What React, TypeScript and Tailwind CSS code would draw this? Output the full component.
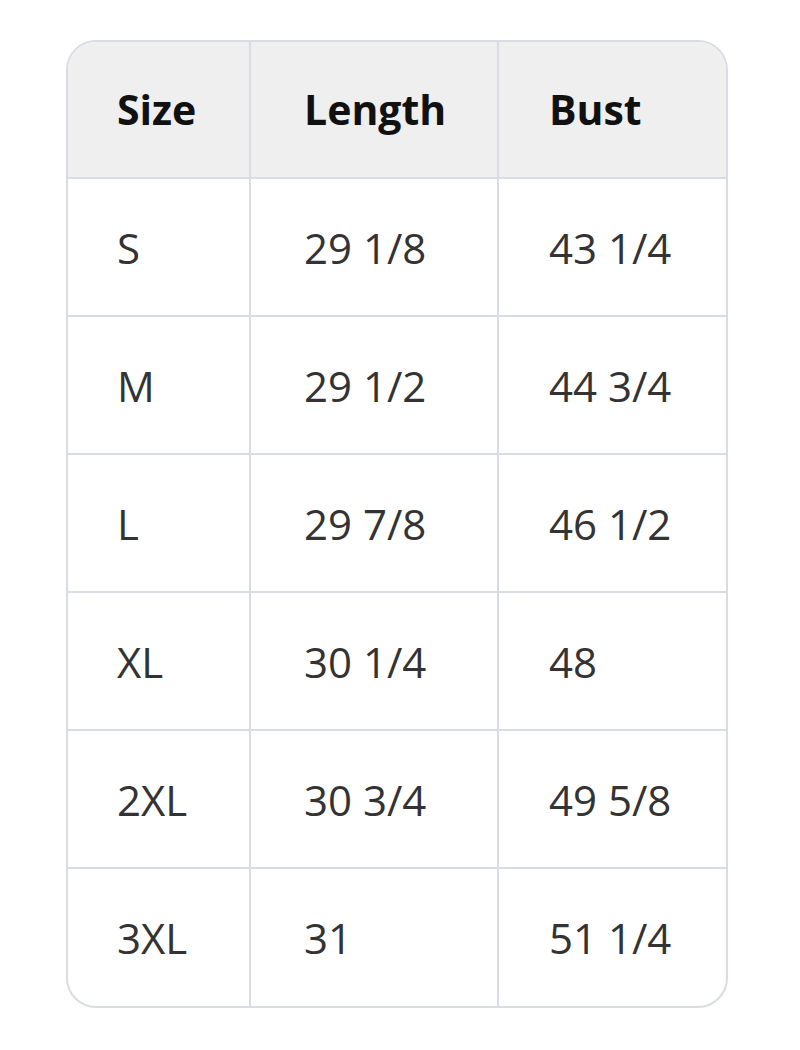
const rows = [
  ['S', '29 1/8', '43 1/4'],
  ['M', '29 1/2', '44 3/4'],
  ['L', '29 7/8', '46 1/2'],
  ['XL', '30 1/4', '48'],
  ['2XL', '30 3/4', '49 5/8'],
  ['3XL', '31', '51 1/4'],
];

const SizeChart = () => {
  return (
    <div className="min-h-[1050px] bg-white pt-[40px] pl-[66px]" style={{ fontFamily: '"Open Sans", "Noto Sans", sans-serif' }}>
      <div className="w-[662px] rounded-[30px] border-2 border-[#d9dde3] overflow-hidden">
        <table className="w-full border-collapse table-fixed">
          <colgroup>
            <col className="w-[182px]" />
            <col className="w-[248px]" />
            <col className="w-[230px]" />
          </colgroup>
          <thead>
            <tr className="bg-[#efefef] h-[136px] text-left text-[41px] font-semibold text-[#111]">
              <th className="pl-[49px] border-r-2 border-b-2 border-[#d9dde3]">Size</th>
              <th className="pl-[53px] border-r-2 border-b-2 border-[#d9dde3]">Length</th>
              <th className="pl-[50px] border-b-2 border-[#d9dde3]">Bust</th>
            </tr>
          </thead>
          <tbody className="text-[42px] text-[#333]">
            {rows.map((r, i) => (
              <tr key={r[0]} className="h-[138px]">
                <td className={`pl-[49px] border-r-2 border-[#d9dde3] ${i < rows.length - 1 ? 'border-b-2' : ''}`}>{r[0]}</td>
                <td className={`pl-[53px] border-r-2 border-[#d9dde3] ${i < rows.length - 1 ? 'border-b-2' : ''}`}>{r[1]}</td>
                <td className={`pl-[50px] border-[#d9dde3] ${i < rows.length - 1 ? 'border-b-2' : ''}`}>{r[2]}</td>
              </tr>
            ))}
          </tbody>
        </table>
      </div>
    </div>
  );
};

export default SizeChart;
